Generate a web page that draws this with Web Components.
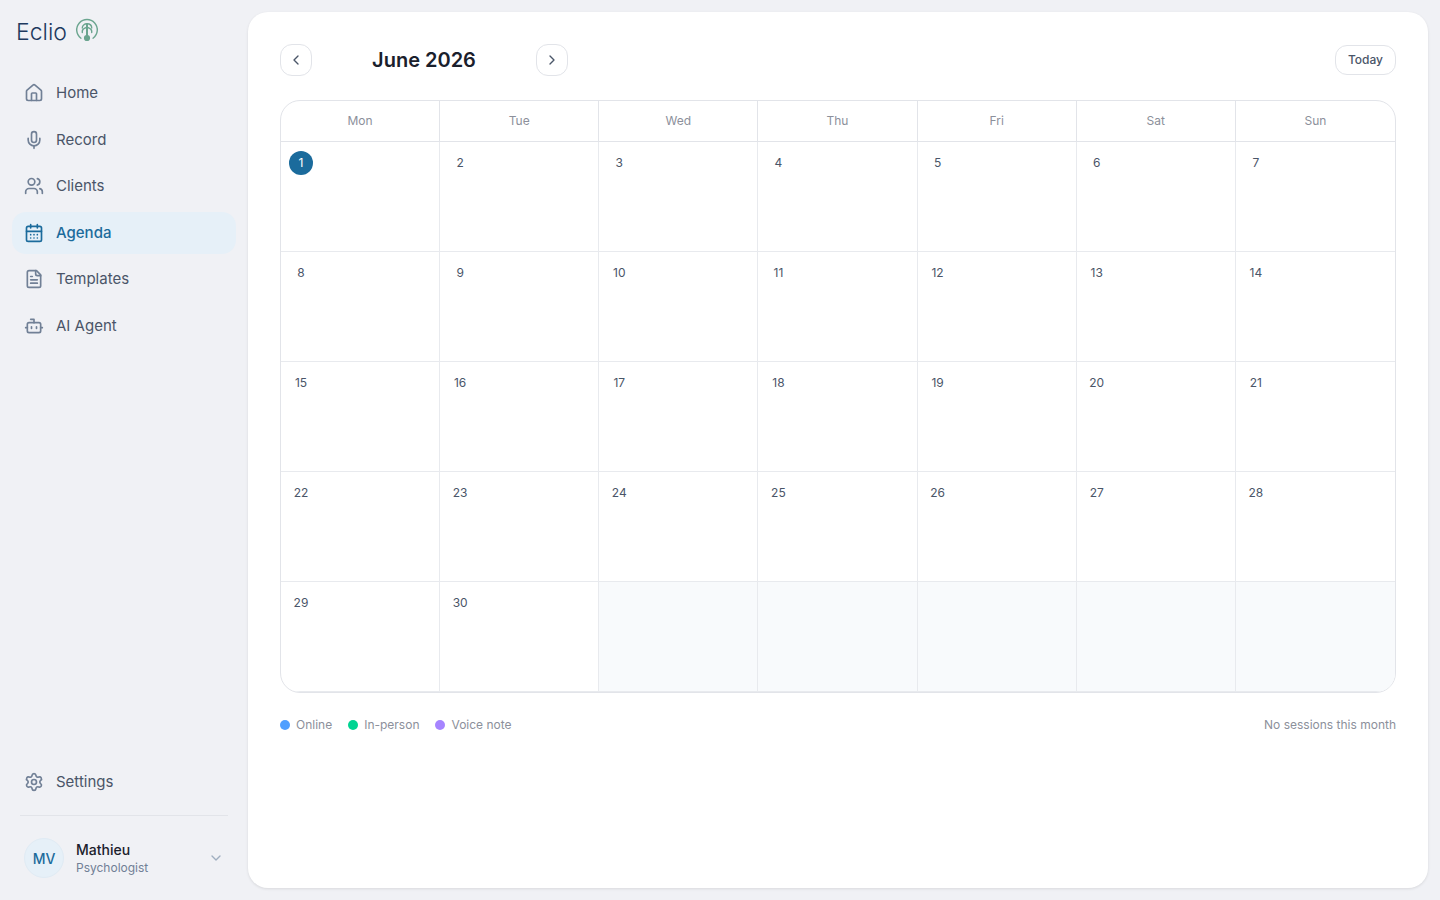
<!DOCTYPE html>
<html lang="en">
<head>
<meta charset="utf-8">
<meta name="viewport" content="width=device-width, initial-scale=1">
<title>Eclio - Agenda</title>
<style>
    :root {
        --page: #f0f1f5;
        --line: #e2e4e9;
        --line-soft: #e8eaee;
        --accent: #1b6b9c;
        --accent-soft: #e6f0f8;
        --text: #1a202c;
        --text-mid: #4a5568;
        --text-soft: #718096;
        --text-mute: #8c909b;
    }
    body {
        margin: 0;
        background: var(--page);
        color: var(--text);
        font-family: Inter, "Liberation Sans", sans-serif;
    }
</style>
</head>
<body>
<app-shell>
    <side-bar slot="sidebar">
        <brand-logo slot="brand">Eclio</brand-logo>
        <nav-item icon="home" href="#home">Home</nav-item>
        <nav-item icon="mic" href="#record">Record</nav-item>
        <nav-item icon="users" href="#clients">Clients</nav-item>
        <nav-item icon="calendar" href="#agenda" active>Agenda</nav-item>
        <nav-item icon="file" href="#templates">Templates</nav-item>
        <nav-item icon="bot" href="#agent">AI Agent</nav-item>
        <nav-item slot="footer" icon="settings" href="#settings">Settings</nav-item>
        <user-menu slot="user" initials="MV">
            <span slot="name">Mathieu</span>
            <span slot="role">Psychologist</span>
        </user-menu>
    </side-bar>
    <month-calendar year="2026" month="6" today="2026-06-01">
        <legend-item slot="legend" style="--dot: #4f9fff">Online</legend-item>
        <legend-item slot="legend" style="--dot: #00d492">In-person</legend-item>
        <legend-item slot="legend" style="--dot: #a684ff">Voice note</legend-item>
        <span slot="summary">No sessions this month</span>
    </month-calendar>
</app-shell>

<script>
const ICONS = {
    home: '<path d="M15 21v-8a1 1 0 0 0-1-1h-4a1 1 0 0 0-1 1v8"/><path d="M3 10a2 2 0 0 1 .709-1.528l7-5.999a2 2 0 0 1 2.582 0l7 5.999A2 2 0 0 1 21 10v9a2 2 0 0 1-2 2H5a2 2 0 0 1-2-2z"/>',
    mic: '<path d="M12 2a3 3 0 0 0-3 3v7a3 3 0 0 0 6 0V5a3 3 0 0 0-3-3Z"/><path d="M19 10v2a7 7 0 0 1-14 0v-2"/><path d="M12 19v3"/>',
    users: '<path d="M16 21v-2a4 4 0 0 0-4-4H6a4 4 0 0 0-4 4v2"/><circle cx="9" cy="7" r="4"/><path d="M22 21v-2a4 4 0 0 0-3-3.87"/><path d="M16 3.13a4 4 0 0 1 0 7.75"/>',
    calendar: '<path d="M8 2v4M16 2v4"/><rect width="18" height="18" x="3" y="4" rx="2"/><path d="M3 10h18M8 14h.01M12 14h.01M16 14h.01M8 18h.01M12 18h.01M16 18h.01"/>',
    file: '<path d="M15 2H6a2 2 0 0 0-2 2v16a2 2 0 0 0 2 2h12a2 2 0 0 0 2-2V7Z"/><path d="M14 2v4a2 2 0 0 0 2 2h4"/><path d="M10 9H8M16 13H8M16 17H8"/>',
    bot: '<path d="M12 8V4H8"/><rect width="16" height="12" x="4" y="8" rx="2"/><path d="M2 14h2M20 14h2M15 13v2M9 13v2"/>',
    settings: '<path d="M9.671 4.136a2.34 2.34 0 0 1 4.659 0 2.34 2.34 0 0 0 3.319 1.915 2.34 2.34 0 0 1 2.33 4.033 2.34 2.34 0 0 0 0 3.831 2.34 2.34 0 0 1-2.33 4.033 2.34 2.34 0 0 0-3.319 1.915 2.34 2.34 0 0 1-4.659 0 2.34 2.34 0 0 0-3.32-1.915 2.34 2.34 0 0 1-2.33-4.033 2.34 2.34 0 0 0 0-3.831A2.34 2.34 0 0 1 6.35 6.051a2.34 2.34 0 0 0 3.319-1.915"/><circle cx="12" cy="12" r="3"/>',
    left: '<path d="m15 18-6-6 6-6"/>',
    right: '<path d="m9 18 6-6-6-6"/>',
    down: '<path d="m6 9 6 6 6-6"/>'
};

class LineIcon extends HTMLElement {
    connectedCallback() {
        if (this.shadowRoot) return;
        this.attachShadow({ mode: 'open' }).innerHTML = `
            <style>
                :host {
                    display: block;
                    flex: none;
                    width: 20px;
                    height: 20px;
                }
                svg {
                    display: block;
                    width: 100%;
                    height: 100%;
                }
            </style>
            <svg viewBox="0 0 24 24" fill="none" stroke="currentColor" stroke-width="2"
                stroke-linecap="round" stroke-linejoin="round" aria-hidden="true">${ICONS[this.getAttribute('name')]}</svg>
        `;
    }
}

class AppShell extends HTMLElement {
    constructor() {
        super();
        this.attachShadow({ mode: 'open' });
        this.shadowRoot.innerHTML = `
            <style>
                :host {
                    display: grid;
                    grid-template-columns: 248px minmax(0, 1fr);
                    min-height: 100vh;
                }
                main {
                    margin: 12px 12px 12px 0;
                    padding: 32px;
                    background: #fff;
                    border-radius: 20px;
                    box-shadow: 0 1px 3px rgba(0, 0, 0, 0.1);
                }
            </style>
            <slot name="sidebar"></slot>
            <main><slot></slot></main>
        `;
    }
}

class SideBar extends HTMLElement {
    constructor() {
        super();
        this.attachShadow({ mode: 'open' });
        this.shadowRoot.innerHTML = `
            <style>
                :host {
                    display: flex;
                    flex-direction: column;
                    box-sizing: border-box;
                    padding: 12px;
                }
                nav {
                    display: flex;
                    flex-direction: column;
                    gap: 4px;
                    margin-top: 20px;
                }
                .bottom {
                    margin-top: auto;
                }
                hr {
                    margin: 12px 8px;
                    border: 0;
                    border-top: 1px solid var(--line);
                }
            </style>
            <slot name="brand"></slot>
            <nav aria-label="Main"><slot></slot></nav>
            <div class="bottom">
                <slot name="footer"></slot>
                <hr>
                <slot name="user"></slot>
            </div>
        `;
    }
}

class BrandLogo extends HTMLElement {
    constructor() {
        super();
        this.attachShadow({ mode: 'open' });
        this.shadowRoot.innerHTML = `
            <style>
                :host {
                    display: flex;
                    align-items: center;
                    gap: 8px;
                    height: 40px;
                    padding: 0 4px;
                    color: #1e3a5f;
                    font-size: 23px;
                    font-weight: 300;
                    line-height: 32px;
                }
                svg {
                    width: 24px;
                    height: 24px;
                    margin-bottom: 4px;
                    stroke: #6ba58f;
                }
            </style>
            <slot></slot>
            <svg viewBox="0 0 24 24" fill="none" stroke-width="1.4" stroke-linecap="round" aria-hidden="true">
                <path d="M6 20.200A10.300 10.300 0 1 1 18 20.200"/>
                <path d="M12 6v12" stroke-width="2"/>
                <path d="M7.300 14.500v-1.500c0-2 1.600-2.800 4-3.700M16.700 14.500v-1.500c0-2-1.600-2.800-4-3.700"/>
                <path d="M7.300 10C7.300 7.400 9.400 5.800 12 5.800S16.700 7.400 16.700 10"/>
                <circle cx="12" cy="20" r="2.400" fill="#6ba58f"/>
            </svg>
        `;
    }
}

class NavItem extends HTMLElement {
    connectedCallback() {
        if (this.shadowRoot) return;
        const current = this.hasAttribute('active') ? 'aria-current="page"' : '';
        this.attachShadow({ mode: 'open' }).innerHTML = `
            <style>
                :host {
                    display: block;
                }
                a {
                    display: flex;
                    align-items: center;
                    gap: 12px;
                    padding: 10px 12px;
                    border-radius: 14px;
                    color: var(--text-mid);
                    font-size: 15px;
                    line-height: 1.5;
                    text-decoration: none;
                }
                line-icon {
                    color: var(--text-soft);
                }
                a[aria-current] {
                    background: var(--accent-soft);
                    color: var(--accent);
                    font-weight: 500;
                }
                a[aria-current] line-icon {
                    color: inherit;
                }
            </style>
            <a href="${this.getAttribute('href')}" ${current}>
                <line-icon name="${this.getAttribute('icon')}"></line-icon>
                <slot></slot>
            </a>
        `;
    }
}

class UserMenu extends HTMLElement {
    connectedCallback() {
        if (this.shadowRoot) return;
        this.attachShadow({ mode: 'open' }).innerHTML = `
            <style>
                :host {
                    display: block;
                }
                button {
                    display: flex;
                    align-items: center;
                    gap: 12px;
                    width: 100%;
                    padding: 10px 12px;
                    border: 0;
                    background: none;
                    color: inherit;
                    font: inherit;
                    text-align: left;
                    cursor: pointer;
                }
                .avatar {
                    display: grid;
                    place-items: center;
                    box-sizing: border-box;
                    width: 40px;
                    height: 40px;
                    border: 1px solid #e0ebf4;
                    border-radius: 50%;
                    background: var(--accent-soft);
                    color: var(--accent);
                    font-size: 14px;
                    font-weight: 500;
                }
                .who {
                    flex: 1;
                    display: flex;
                    flex-direction: column;
                    padding-top: 2px;
                }
                .name {
                    font-size: 14px;
                    font-weight: 500;
                    line-height: 18px;
                }
                .role {
                    color: var(--text-soft);
                    font-size: 12px;
                    line-height: 18px;
                }
                line-icon {
                    width: 16px;
                    height: 16px;
                    color: #a0aec0;
                }
            </style>
            <button type="button" aria-haspopup="menu">
                <span class="avatar">${this.getAttribute('initials')}</span>
                <span class="who">
                    <span class="name"><slot name="name"></slot></span>
                    <span class="role"><slot name="role"></slot></span>
                </span>
                <line-icon name="down"></line-icon>
            </button>
        `;
    }
}

class LegendItem extends HTMLElement {
    constructor() {
        super();
        this.attachShadow({ mode: 'open' });
        this.shadowRoot.innerHTML = `
            <style>
                :host {
                    display: flex;
                    align-items: center;
                    gap: 6px;
                }
                i {
                    width: 10px;
                    height: 10px;
                    border-radius: 50%;
                    background: var(--dot);
                }
            </style>
            <i></i><slot></slot>
        `;
    }
}

class MonthCalendar extends HTMLElement {
    constructor() {
        super();
        this.attachShadow({ mode: 'open' });
        this.shadowRoot.innerHTML = `
            <style>
                :host {
                    display: block;
                }
                header, .month, footer, .legend {
                    display: flex;
                    align-items: center;
                }
                header, footer {
                    justify-content: space-between;
                }
                .month {
                    gap: 12px;
                }
                h1 {
                    min-width: 200px;
                    margin: 0;
                    font-size: 20px;
                    font-weight: 600;
                    line-height: 28px;
                    text-align: center;
                }
                button {
                    display: grid;
                    place-items: center;
                    box-sizing: border-box;
                    border: 1px solid var(--line);
                    border-radius: 12px;
                    background: #fff;
                    color: var(--text-mid);
                    font: 500 12px/16px Inter, "Liberation Sans", sans-serif;
                    cursor: pointer;
                }
                .step {
                    width: 32px;
                    height: 32px;
                    padding: 0;
                }
                .step line-icon {
                    width: 16px;
                    height: 16px;
                }
                .today {
                    padding: 6px 12px;
                }
                .grid {
                    margin: 24px 0;
                    border: 1px solid var(--line);
                    border-radius: 20px;
                    overflow: hidden;
                }
                table {
                    width: 100%;
                    table-layout: fixed;
                    border-spacing: 0;
                }
                th, td {
                    box-sizing: border-box;
                    border: solid var(--line);
                    border-width: 0 1px 1px 0;
                }
                th:last-child, td:last-child {
                    border-right: 0;
                }
                th {
                    padding: 12px 8px;
                    color: var(--text-mute);
                    font-size: 12px;
                    font-weight: 400;
                    line-height: 16px;
                }
                td {
                    height: 110px;
                    padding: 9px 8px;
                    border-color: var(--line-soft);
                    vertical-align: top;
                }
                td.blank {
                    background: #f8fafc;
                }
                time {
                    display: block;
                    width: 24px;
                    height: 24px;
                    border-radius: 50%;
                    color: var(--text-mid);
                    font-size: 12px;
                    font-weight: 400;
                    line-height: 23px;
                    text-align: center;
                }
                time.now {
                    background: var(--accent);
                    color: #fff;
                }
                footer {
                    color: var(--text-mute);
                    font-size: 12px;
                    line-height: 16px;
                }
                .legend {
                    gap: 16px;
                }
            </style>
            <header>
                <div class="month">
                    <button class="step" id="prev" type="button" aria-label="Previous month"><line-icon name="left"></line-icon></button>
                    <h1></h1>
                    <button class="step" id="next" type="button" aria-label="Next month"><line-icon name="right"></line-icon></button>
                </div>
                <button class="today" type="button">Today</button>
            </header>
            <div class="grid">
                <table>
                    <thead>
                        <tr>
                            <th scope="col">Mon</th>
                            <th scope="col">Tue</th>
                            <th scope="col">Wed</th>
                            <th scope="col">Thu</th>
                            <th scope="col">Fri</th>
                            <th scope="col">Sat</th>
                            <th scope="col">Sun</th>
                        </tr>
                    </thead>
                    <tbody></tbody>
                </table>
            </div>
            <footer>
                <div class="legend"><slot name="legend"></slot></div>
                <slot name="summary"></slot>
            </footer>
        `;

        // Bind event handlers
        this.shadowRoot.querySelector('#prev').addEventListener('click', () => this.move(-1));
        this.shadowRoot.querySelector('#next').addEventListener('click', () => this.move(1));
        this.shadowRoot.querySelector('.today').addEventListener('click', () => this.reset());
    }

    connectedCallback() {
        this.reset();
    }

    reset() {
        this.date = new Date(Number(this.getAttribute('year')), Number(this.getAttribute('month')) - 1, 1);
        this.render();
    }

    move(step) {
        this.date.setMonth(this.date.getMonth() + step);
        this.render();
    }

    render() {
        const year = this.date.getFullYear();
        const month = this.date.getMonth();
        const offset = (this.date.getDay() + 6) % 7; // weeks start on Monday
        const days = new Date(year, month + 1, 0).getDate();
        const prefix = `${year}-${String(month + 1).padStart(2, '0')}-`;
        let rows = '';
        for (let start = 1 - offset; start <= days; start += 7) {
            rows += '<tr>';
            for (let day = start; day < start + 7; day++) {
                if (day < 1 || day > days) {
                    rows += '<td class="blank"></td>';
                    continue;
                }
                const iso = prefix + String(day).padStart(2, '0');
                const now = iso === this.getAttribute('today') ? 'class="now"' : '';
                rows += `<td><time datetime="${iso}" ${now}>${day}</time></td>`;
            }
            rows += '</tr>';
        }
        this.shadowRoot.querySelector('tbody').innerHTML = rows;
        this.shadowRoot.querySelector('h1').textContent =
            this.date.toLocaleDateString('en-US', { month: 'long', year: 'numeric' });
    }
}

customElements.define('line-icon', LineIcon);
customElements.define('app-shell', AppShell);
customElements.define('side-bar', SideBar);
customElements.define('brand-logo', BrandLogo);
customElements.define('nav-item', NavItem);
customElements.define('user-menu', UserMenu);
customElements.define('legend-item', LegendItem);
customElements.define('month-calendar', MonthCalendar);
</script>
</body>
</html>
